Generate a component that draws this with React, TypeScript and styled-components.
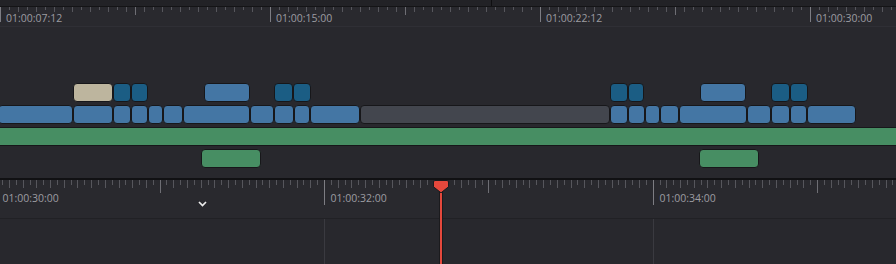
import React from "react";
import styled, { createGlobalStyle } from "styled-components";

type ClipKind = "blue" | "navy" | "beige" | "gray" | "green";
type ClipData = [number, number, ClipKind];

const clipColors: Record<ClipKind, string> = {
  blue: "#4476a4",
  navy: "#1b5d84",
  beige: "#bdb59e",
  gray: "#43464e",
  green: "#478e63",
};

const tracks: ClipData[][] = [
  [
    [73, 113, "beige"],
    [113, 131, "navy"],
    [131, 148, "navy"],
    [204, 250, "blue"],
    [274, 293, "navy"],
    [293, 311, "navy"],
    [610, 628, "navy"],
    [628, 644, "navy"],
    [700, 746, "blue"],
    [771, 790, "navy"],
    [790, 808, "navy"],
  ],
  [
    [-2, 73, "blue"],
    [73, 113, "blue"],
    [113, 131, "blue"],
    [131, 148, "blue"],
    [148, 162.5, "blue"],
    [162.5, 182.5, "blue"],
    [182.5, 250, "blue"],
    [250, 273.5, "blue"],
    [273.5, 293.5, "blue"],
    [293.5, 310, "blue"],
    [310, 360, "blue"],
    [360, 609.5, "gray"],
    [609.5, 627.5, "blue"],
    [627.5, 644.5, "blue"],
    [644.5, 659.5, "blue"],
    [659.5, 679, "blue"],
    [679, 746.5, "blue"],
    [746.5, 770.5, "blue"],
    [770.5, 790, "blue"],
    [790, 806.5, "blue"],
    [806.5, 856, "blue"],
  ],
  [[-6, 902, "green"]],
  [
    [201, 261, "green"],
    [699, 759, "green"],
  ],
];

const GlobalStyle = createGlobalStyle`
  html, body {
    margin: 0;
    padding: 0;
    background: #28282d;
    overflow: hidden;
  }
  body {
    font-family: "Open Sans", "Noto Sans", sans-serif;
  }
`;

const Timeline = styled.div`
  position: relative;
  width: 896px;
  height: 264px;
  display: flex;
  flex-direction: column;
  background: #28282d;
  overflow: hidden;
`;

const TopStrip = styled.div`
  display: flex;
  flex-shrink: 0;
  height: 6px;
  background: #222226;
  border-bottom: 1px solid #141416;
`;

const StripPane = styled.div`
  width: 491px;
  border-right: 1px solid #0f0f11;
`;

const Ruler = styled.div<{ $height: number; $lower?: boolean }>`
  position: relative;
  flex-shrink: 0;
  height: ${({ $height }) => $height}px;
  background: #29292e;
  border-top: ${({ $lower }) => ($lower ? "2px solid #111113" : "none")};
  border-bottom: 1px solid ${({ $lower }) => ($lower ? "#212125" : "#2f2f35")};
`;

const TickLayer = styled.svg`
  position: absolute;
  left: 0;
  top: 0;
  display: block;
`;

const TimeLabel = styled.span<{ $top: number }>`
  position: absolute;
  top: ${({ $top }) => $top}px;
  font-size: 10.5px;
  line-height: 12px;
  color: #9c9ca1;
  white-space: nowrap;
`;

const Collapse = styled.svg`
  position: absolute;
  left: 198px;
  top: 21px;
`;

const TrackArea = styled.div`
  flex-shrink: 0;
  height: 151px;
  box-sizing: border-box;
  padding-top: 56px;
  display: flex;
  flex-direction: column;
  gap: 3px;
`;

const TrackRow = styled.div`
  display: flex;
  height: 19px;
`;

const Clip = styled.div<{ $kind: ClipKind }>`
  box-sizing: border-box;
  flex: none;
  height: 100%;
  border: 1px solid #17171a;
  border-radius: 4px;
  background: ${({ $kind }) => clipColors[$kind]};
`;

const BottomArea = styled.div`
  position: relative;
  flex: 1;
`;

const GridLine = styled.div`
  position: absolute;
  top: 0;
  bottom: 0;
  width: 1px;
  background: #3a3a40;
`;

const Playhead = styled.svg`
  position: absolute;
  left: 432px;
  top: 180px;
`;

type TickSpec = {
  origin: number;
  step: number;
  major: number;
  medium: number;
  heights: [number, number, number, number];
};

const Ticks = ({ origin, step, major, medium, heights }: TickSpec) => {
  const lines: React.ReactNode[] = [];
  for (let i = 0; origin + i * step <= 897; i++) {
    const x = Math.round(origin + i * step) + 0.5;
    if (x < 0) continue;
    let h = heights[3];
    let color = "#56565c";
    if (i % major === 0) {
      h = heights[0];
      color = "#7d7d83";
    } else if (i % medium === 0) {
      h = heights[1];
      color = "#6e6e74";
    } else if (i % 2 === 0) {
      h = heights[2];
    }
    lines.push(<line key={i} x1={x} x2={x} y1={0} y2={h} stroke={color} strokeWidth={1} />);
  }
  return (
    <TickLayer width={896} height={40}>
      {lines}
    </TickLayer>
  );
};

const topLabels = [
  { x: 0, text: "01:00:07:12" },
  { x: 270, text: "01:00:15:00" },
  { x: 540, text: "01:00:22:12" },
  { x: 810, text: "01:00:30:00" },
];

const bottomStep = 328.7 / 48;
const bottomLabels = [
  { x: -4, text: "01:00:30:00" },
  { x: 324, text: "01:00:32:00" },
  { x: 653, text: "01:00:34:00" },
];

const renderTrack = (clips: ClipData[], idx: number) => {
  let prev = 0;
  return (
    <TrackRow key={idx}>
      {clips.map(([start, end, kind], i) => {
        const style = { marginLeft: start - prev, width: end - start };
        prev = end;
        return <Clip key={i} $kind={kind} style={style} />;
      })}
    </TrackRow>
  );
};

export default function App() {
  return (
    <>
      <GlobalStyle />
      <Timeline>
        <TopStrip>
          <StripPane />
        </TopStrip>

        <Ruler $height={19}>
          <Ticks origin={0} step={9} major={30} medium={15} heights={[15, 8, 5, 3]} />
          {topLabels.map((l) => (
            <TimeLabel key={l.text} $top={4.5} style={{ left: l.x + 6 }}>
              {l.text}
            </TimeLabel>
          ))}
        </Ruler>

        <TrackArea>{tracks.map(renderTrack)}</TrackArea>

        <Ruler $height={38} $lower>
          <Ticks origin={-4.7} step={bottomStep} major={48} medium={24} heights={[25, 13, 8, 5]} />
          {bottomLabels.map((l) => (
            <TimeLabel key={l.text} $top={11.5} style={{ left: l.x + 6.5 }}>
              {l.text}
            </TimeLabel>
          ))}
          <Collapse width={9} height={6} viewBox="0 0 9 6">
            <polyline points="1,1 4.5,4.5 8,1" fill="none" stroke="#ececec" strokeWidth={1.7} />
          </Collapse>
        </Ruler>

        <BottomArea>
          <GridLine style={{ left: 324 }} />
          <GridLine style={{ left: 653 }} />
        </BottomArea>

        <Playhead width={18} height={84} viewBox="0 0 18 84">
          <rect x={7} y={10} width={4} height={74} fill="#1b1b1e" />
          <rect x={8} y={10} width={2} height={74} fill="#e5483c" />
          <path
            d="M1.5,2 Q1.5,0.5 3,0.5 H15 Q16.5,0.5 16.5,2 V6.8 L9,12.8 L1.5,6.8 Z"
            fill="#e5483c"
            stroke="#1b1b1e"
            strokeWidth={1}
          />
        </Playhead>
      </Timeline>
    </>
  );
}
